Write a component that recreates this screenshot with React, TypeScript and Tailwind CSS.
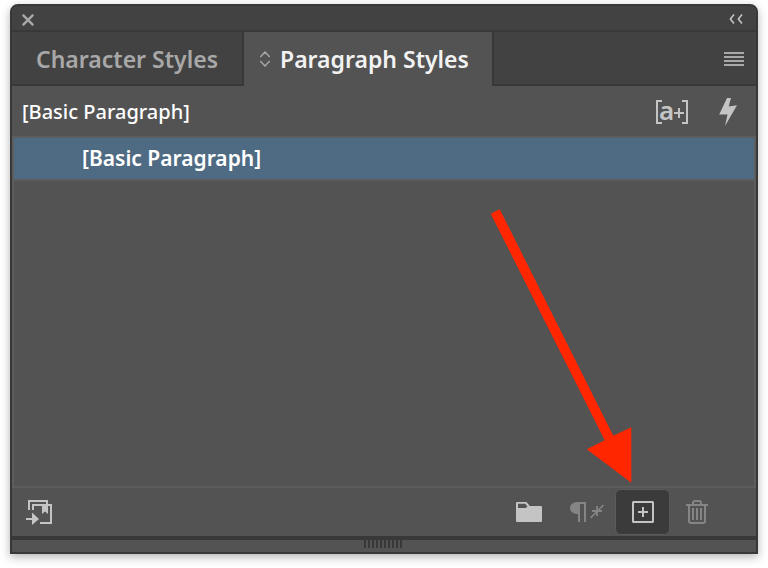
import { useState } from "react";
import type { ReactNode } from "react";
import clsx from "clsx";

const tabs = ["Character Styles", "Paragraph Styles"];
const styles = ["[Basic Paragraph]"];

function IconButton({
  label,
  className,
  children,
}: {
  label: string;
  className?: string;
  children: ReactNode;
}) {
  return (
    <button type="button" aria-label={label} title={label} className={clsx("flex items-center justify-center", className)}>
      {children}
    </button>
  );
}

function CloseIcon() {
  return (
    <svg width="12" height="12" viewBox="0 0 12 12" fill="none" stroke="currentColor" strokeWidth="2.4">
      <path d="M.8.8l10.4 10.4M11.2.8L.8 11.2" />
    </svg>
  );
}

function CollapseIcon() {
  return (
    <svg width="14" height="10" viewBox="0 0 14 10" fill="none" stroke="currentColor" strokeWidth="1.6">
      <path d="M5 .6L1.4 5 5 9.4M13 .6L9.4 5l3.6 4.4" />
    </svg>
  );
}

function SortIcon() {
  return (
    <svg width="10" height="16" viewBox="0 0 10 16" fill="none" stroke="#a8a8a8" strokeWidth="1.4">
      <path d="M.5 6.2V5.8L5 1l4.5 4.8v.4M.5 9.8v.4L5 15l4.5-4.8v-.4" />
    </svg>
  );
}

function MenuIcon() {
  return (
    <svg width="20" height="14" viewBox="0 0 20 14" fill="currentColor">
      <path d="M0 0h20v2H0zM0 4h20v2H0zM0 8h20v2H0zM0 12h20v2H0z" />
    </svg>
  );
}

function OverrideIcon() {
  return (
    <svg width="32" height="24" viewBox="0 0 32 24" fill="none" stroke="currentColor" strokeWidth="2" className="overflow-visible">
      <path d="M6 1H1v22h5M26 1h5v22h-5M18 13h10M23 8v10" />
      <text x="3" y="20" fill="currentColor" stroke="none" className="font-['Noto_Sans',sans-serif] text-[26px] font-semibold">
        a
      </text>
    </svg>
  );
}

function BoltIcon() {
  return (
    <svg width="18" height="28" viewBox="0 0 18 28" fill="currentColor">
      <path d="M8 0h4L9.7 8.5 18 7.300 6 28l2.500-11.500H.2z" />
    </svg>
  );
}

function LoadIcon() {
  return (
    <svg width="26" height="25" viewBox="0 0 26 25" fill="none" stroke="currentColor" strokeWidth="2">
      <path d="M3 10V1h18v3M7 10V5h18v18H14M0 19h7" />
      <path d="M16 4h6v10l-3-2.5-3 2.5zM6 12.5l7 6.5-7 6z" fill="currentColor" stroke="none" />
    </svg>
  );
}

function FolderIcon() {
  return (
    <svg width="26" height="20" viewBox="0 0 26 20" fill="currentColor" fillRule="evenodd">
      <path d="M1 0h9.5l3.3 4H25a1 1 0 0 1 1 1v14a1 1 0 0 1-1 1H1a1 1 0 0 1-1-1V1a1 1 0 0 1 1-1zM2 1.8v4.200h7.500l2-1.200-2.200-3z" />
    </svg>
  );
}

function ClearOverridesIcon() {
  return (
    <svg width="34" height="20" viewBox="0 0 34 20" fill="none" stroke="currentColor">
      <path d="M16 0v20h-2V2h-4v18H8v-8C3 12 0 9.5 0 6s3-6 8-6z" fill="currentColor" stroke="none" />
      <path d="M20.500 16L33.500 3" strokeWidth="1.600" />
      <path d="M22 9h10M27 4v10" strokeWidth="1.800" />
    </svg>
  );
}

function NewStyleIcon() {
  return (
    <svg width="22" height="22" viewBox="0 0 22 22" fill="none" stroke="currentColor" strokeWidth="2">
      <rect x="1" y="1" width="20" height="20" rx=".5" />
      <path d="M6 11h10M11 6v10" />
    </svg>
  );
}

function TrashIcon() {
  return (
    <svg width="22" height="24" viewBox="0 0 22 24" fill="none" stroke="currentColor" strokeWidth="2">
      <path d="M0 5h22M7 4.5V3q0-2 2-2h4q2 0 2 2v1.5M3 5v16q0 2 2 2h12q2 0 2-2V5" />
      <path d="M7 8v12M11 8v12M15 8v12" />
    </svg>
  );
}

function PointerArrow() {
  return (
    <svg
      aria-hidden="true"
      width="142"
      height="274"
      viewBox="0 0 142 274"
      fill="#ff2600"
      className="pointer-events-none absolute right-[38px] bottom-full mb-1.5 max-w-none"
    >
      <path d="M.7 4.7L9.7.3l113.6 226.4 18-8.4v55.4L96.7 240.300l18-9z" />
    </svg>
  );
}

export default function App() {
  const [activeTab, setActiveTab] = useState("Paragraph Styles");
  const [selected, setSelected] = useState(styles[0]);

  return (
    <main className="flex min-h-screen flex-col bg-white px-2.5 pt-1 pb-3.5 font-['Noto_Sans',sans-serif] text-[#c4c4c4]">
      <section className="flex grow flex-col rounded-t-lg border-2 border-[#383838] bg-[#535353] shadow-[0_3px_10px_rgba(0,0,0,0.3)]">
        <header className="flex h-[26px] items-center justify-between rounded-t-md border-b-2 border-[#383838] bg-[#424242] pt-1 pr-[13px] pl-2.5">
          <IconButton label="Close" className="text-[#a8a8a8]">
            <CloseIcon />
          </IconButton>
          <IconButton label="Collapse panel" className="pb-0.5">
            <CollapseIcon />
          </IconButton>
        </header>

        <div className="flex h-[54px] bg-[#424242]">
          <div role="tablist" className="flex">
            {tabs.map((tab) => {
              const isActive = tab === activeTab;
              return (
                <button
                  key={tab}
                  type="button"
                  role="tab"
                  aria-selected={isActive}
                  onClick={() => setActiveTab(tab)}
                  className={clsx(
                    "flex items-center gap-2.5 border-r-2 border-[#383838] text-[23px] leading-7 font-[650] whitespace-nowrap",
                    isActive ? "w-[250px] bg-[#535353] pl-4 text-[#f2f2f2]" : "w-[232px] border-b-2 pt-0.5 pl-6 text-[#a8a8a8]"
                  )}
                >
                  {isActive && <SortIcon />}
                  {tab}
                </button>
              );
            })}
          </div>
          <div className="flex grow items-center justify-end border-b-2 border-[#383838] pt-0.5 pr-3">
            <IconButton label="Panel menu" className="text-[#a8a8a8]">
              <MenuIcon />
            </IconButton>
          </div>
        </div>

        <div className="flex h-[50px] items-center pt-0.5 pr-[19px] pl-2.5">
          <p className="grow text-[20px] leading-7 font-medium text-white">{selected}</p>
          <div className="flex items-center gap-[31px]">
            <IconButton label="Style override highlighter">
              <OverrideIcon />
            </IconButton>
            <IconButton label="Quick apply">
              <BoltIcon />
            </IconButton>
          </div>
        </div>

        <ul className="grow border-2 border-[#5d5d5d]">
          {styles.map((name) => (
            <li key={name} className="border-b-2 border-[#5d5d5d]">
              <button
                type="button"
                onClick={() => setSelected(name)}
                className={clsx(
                  "flex h-[41px] w-full items-center pb-0.5 pl-[68px] text-[21px] leading-7 font-[650] text-white",
                  name === selected && "bg-[#4f6b83]"
                )}
              >
                {name}
              </button>
            </li>
          ))}
        </ul>

        <footer className="flex h-12 items-center justify-between pr-12 pl-3.5">
          <IconButton label="Load styles">
            <LoadIcon />
          </IconButton>
          <div className="flex items-center">
            <IconButton label="New style group" className="mr-7">
              <FolderIcon />
            </IconButton>
            <IconButton label="Clear overrides" className="mr-[11px] text-[#858585]">
              <ClearOverridesIcon />
            </IconButton>
            <div className="relative mr-4">
              <IconButton label="Create new style" className="h-[46px] w-[55px] rounded-md border border-[#5a5a5a] bg-[#3b3b3b]">
                <NewStyleIcon />
              </IconButton>
              <PointerArrow />
            </div>
            <IconButton label="Delete style" className="text-[#858585]">
              <TrashIcon />
            </IconButton>
          </div>
        </footer>

        <div className="flex h-4 justify-center border-t-4 border-[#383838] pr-0.5">
          <svg width="38" height="8" viewBox="0 0 38 8" fill="none" stroke="#383838" strokeWidth="8">
            <path d="M0 4h38" strokeDasharray="2 2" />
          </svg>
        </div>
      </section>
    </main>
  );
}
